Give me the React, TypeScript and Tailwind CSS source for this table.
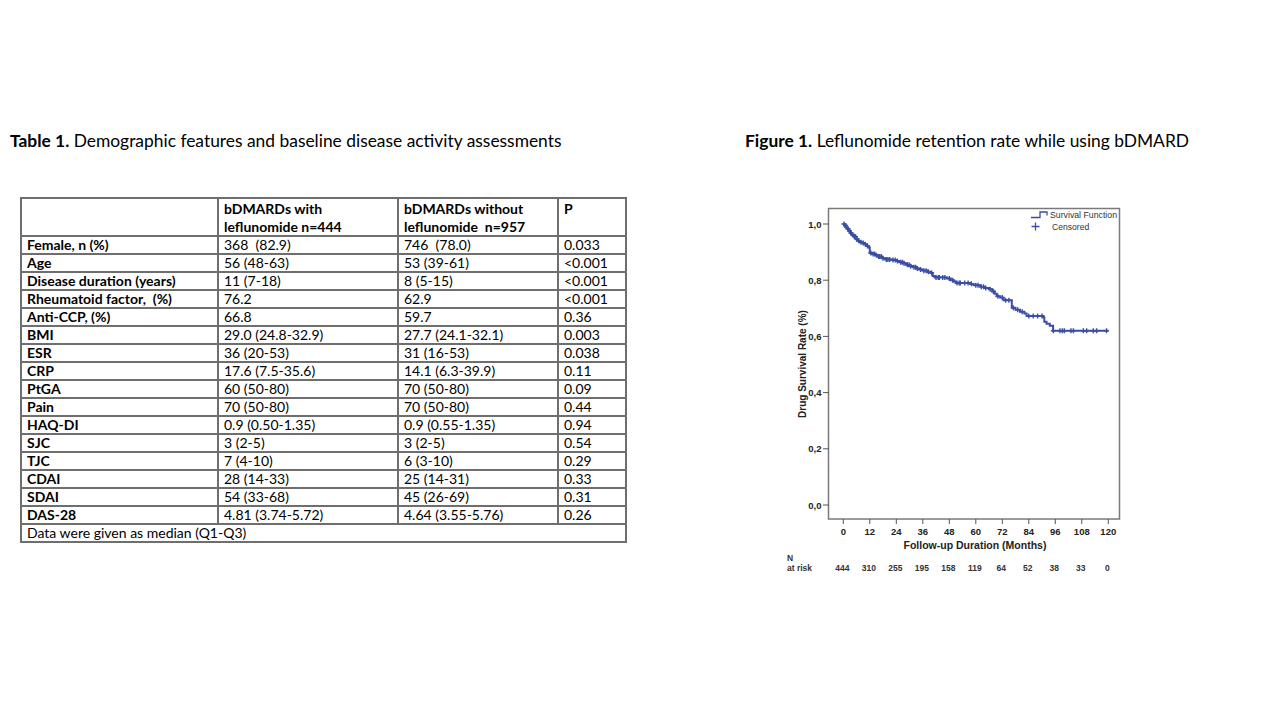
import React from 'react'

type Row = { label: string; a: string; b: string; p: string }

const rows: Row[] = [
    { label: 'Female, n (%)', a: '368  (82.9)', b: '746  (78.0)', p: '0.033' },
    { label: 'Age', a: '56 (48-63)', b: '53 (39-61)', p: '<0.001' },
    { label: 'Disease duration (years)', a: '11 (7-18)', b: '8 (5-15)', p: '<0.001' },
    { label: 'Rheumatoid factor,  (%)', a: '76.2', b: '62.9', p: '<0.001' },
    { label: 'Anti-CCP, (%)', a: '66.8', b: '59.7', p: '0.36' },
    { label: 'BMI', a: '29.0 (24.8-32.9)', b: '27.7 (24.1-32.1)', p: '0.003' },
    { label: 'ESR', a: '36 (20-53)', b: '31 (16-53)', p: '0.038' },
    { label: 'CRP', a: '17.6 (7.5-35.6)', b: '14.1 (6.3-39.9)', p: '0.11' },
    { label: 'PtGA', a: '60 (50-80)', b: '70 (50-80)', p: '0.09' },
    { label: 'Pain', a: '70 (50-80)', b: '70 (50-80)', p: '0.44' },
    { label: 'HAQ-DI', a: '0.9 (0.50-1.35)', b: '0.9 (0.55-1.35)', p: '0.94' },
    { label: 'SJC', a: '3 (2-5)', b: '3 (2-5)', p: '0.54' },
    { label: 'TJC', a: '7 (4-10)', b: '6 (3-10)', p: '0.29' },
    { label: 'CDAI', a: '28 (14-33)', b: '25 (14-31)', p: '0.33' },
    { label: 'SDAI', a: '54 (33-68)', b: '45 (26-69)', p: '0.31' },
    { label: 'DAS-28', a: '4.81 (3.74-5.72)', b: '4.64 (3.55-5.76)', p: '0.26' },
]

// survival curve steps: [month, rate]
const steps: [number, number][] = [
    [0, 1.0], [0.5, 0.995], [1.2, 0.988], [1.8, 0.982], [2.5, 0.975], [3.2, 0.968], [4, 0.962],
    [5, 0.955], [5.8, 0.946], [6.5, 0.94], [7.5, 0.935], [8.5, 0.932], [9.5, 0.928], [10.5, 0.922],
    [11.5, 0.916], [12, 0.897], [13, 0.893], [14.5, 0.889], [16, 0.884], [17.5, 0.878], [19, 0.874],
    [22, 0.872], [24, 0.868], [25.5, 0.864], [27, 0.86], [28.5, 0.855], [30, 0.85], [31.5, 0.846],
    [33, 0.842], [34.5, 0.838], [36, 0.834], [38, 0.83], [39.5, 0.826], [40.5, 0.815], [41.5, 0.81],
    [47, 0.806], [48.5, 0.8], [50, 0.795], [51, 0.79], [57.5, 0.787], [59, 0.782], [62, 0.777],
    [64, 0.772], [66, 0.768], [67.5, 0.76], [68.5, 0.752], [69.5, 0.743], [71, 0.738], [72.5, 0.729],
    [76.3, 0.702], [78, 0.695], [80, 0.688], [82, 0.681], [83, 0.673], [90.5, 0.668], [91, 0.652],
    [92, 0.645], [93.5, 0.638], [95, 0.62],
]

const censored: number[] = [
    0.3, 1, 1.5, 2.2, 2.8, 3.5, 4.2, 5, 5.5, 6.2, 7, 8, 9, 10, 11, 12.5, 13.5, 14.2, 15, 16, 16.5,
    17.2, 18, 19.5, 20.2, 21, 22.5, 23.5, 24.5, 26, 26.8, 27.5, 29, 29.8, 30.5, 32, 32.8, 33.5, 35,
    36.5, 37.5, 38.5, 40, 42, 43, 43.5, 45, 46, 48, 49.5, 51.5, 52.5, 53, 55, 56.5, 58, 60, 61, 62.5,
    63.5, 64.5, 66.5, 68, 70, 72, 73.5, 75, 77, 79, 81, 84, 86, 88, 90, 95.1, 98.1, 99.2, 100.1,
    103.1, 104.2, 108.7, 110.2, 113.2, 114.7, 119.2,
]

const X = (t: number) => 843.3 + t * 2.2083
const Y = (v: number) => 505 - v * 281

const rateAt = (t: number) => {
    let v = 1
    for (const [st, sv] of steps) {
        if (st <= t) v = sv
    }
    return v
}

const curvePath = () => {
    let d = `M${X(0)},${Y(1)}`
    for (const [t, v] of steps) {
        d += ` H${X(t).toFixed(1)} V${Y(v).toFixed(1)}`
    }
    d += ` H${X(120)}`
    return d
}

const yTicks = [1, 0.8, 0.6, 0.4, 0.2, 0]
const xTicks = [0, 12, 24, 36, 48, 60, 72, 84, 96, 108, 120]
const atRisk = ['444', '310', '255', '195', '158', '119', '64', '52', '38', '33', '0']

const BLUE = '#3b4ea6'

function SurvivalChart() {
    return (
        <svg width="350" height="380" viewBox="780 200 350 380" className="block" style={{ fontFamily: '"Liberation Sans", Arial, sans-serif' }}>
            {/* frame */}
            <rect x="828.5" y="208.5" width="291" height="310.5" fill="none" stroke="#7a7a7a" strokeWidth="1.5" />

            {/* y axis */}
            {yTicks.map((v) => (
                <g key={v}>
                    <line x1="823" x2="828.5" y1={Y(v)} y2={Y(v)} stroke="#555" strokeWidth="1" />
                    <text x="821.5" y={Y(v) + 3.5} textAnchor="end" fontSize="9.5" fontWeight="700" fill="#222">
                        {v.toFixed(1).replace('.', ',')}
                    </text>
                </g>
            ))}
            <text
                transform="translate(806,364) rotate(-90)"
                textAnchor="middle"
                fontSize="10"
                fontWeight="700"
                fill="#222"
            >
                Drug Survival Rate (%)
            </text>

            {/* x axis */}
            {xTicks.map((t, i) => (
                <g key={t}>
                    <line x1={X(t)} x2={X(t)} y1="519" y2="524" stroke="#555" strokeWidth="1" />
                    <text x={X(t)} y="535" textAnchor="middle" fontSize="9.5" fontWeight="700" fill="#222">
                        {t}
                    </text>
                    <text x={X(t) - 1} y="570.5" textAnchor="middle" fontSize="8.5" fontWeight="700" fill="#333">
                        {atRisk[i]}
                    </text>
                </g>
            ))}
            <text x="975" y="549" textAnchor="middle" fontSize="10.5" fontWeight="700" fill="#222">
                Follow-up Duration (Months)
            </text>
            <text x="787" y="560.5" fontSize="8.5" fontWeight="700" fill="#333">N</text>
            <text x="787" y="570.5" fontSize="8.5" fontWeight="700" fill="#333">at risk</text>

            {/* legend */}
            <path d="M1031,217.5 H1040 V212 H1047 V215.5" fill="none" stroke={BLUE} strokeWidth="1.3" />
            <text x="1050" y="218" fontSize="8.6" fill="#333" textLength="67" lengthAdjust="spacingAndGlyphs">Survival Function</text>
            <path d="M1031.5,226.5 H1039.5 M1035.5,222.5 V230.5" stroke={BLUE} strokeWidth="1.3" />
            <text x="1052" y="229.5" fontSize="8.6" fill="#333">Censored</text>

            {/* curve */}
            <path d={curvePath()} fill="none" stroke={BLUE} strokeWidth="2" />
            {censored.map((t) => {
                const cx = X(t)
                const cy = Y(rateAt(t))
                return (
                    <path
                        key={t}
                        d={`M${cx - 2.5},${cy} H${cx + 2.5} M${cx},${cy - 2.5} V${cy + 2.5}`}
                        stroke={BLUE}
                        strokeWidth="1.4"
                    />
                )
            })}
        </svg>
    )
}

const cell = 'border-r-2 border-b-2 border-[#6e6e6e] pl-[5px] h-[18px] leading-[16px] whitespace-nowrap'

export default function App() {
    return (
        <div className="flex h-[720px] w-[1280px] bg-white text-black" style={{ fontFamily: 'Lato, "Open Sans", sans-serif' }}>
            <div className="w-[735px] shrink-0 pl-[10px] pt-[130px]">
                <div className="h-[22px] whitespace-nowrap text-[17.4px] leading-[22px]">
                    <span className="font-bold">Table 1.</span> Demographic features and baseline disease activity assessments
                </div>

                <div className="ml-[10px] mt-[45px] grid w-[607px] grid-cols-[197px_180px_160px_68px] border-t-2 border-l-2 border-[#6e6e6e] text-[14px]">
                    <div className="h-[38px] border-r-2 border-b-2 border-[#6e6e6e]" />
                    <div className="h-[38px] border-r-2 border-b-2 border-[#6e6e6e] pl-[5px] pt-[1px] font-bold leading-[18px]">
                        <div>bDMARDs with</div>
                        <div>leflunomide n=444</div>
                    </div>
                    <div className="h-[38px] border-r-2 border-b-2 border-[#6e6e6e] pl-[5px] pt-[1px] font-bold leading-[18px]">
                        <div>bDMARDs without</div>
                        <div className="whitespace-pre">leflunomide  n=957</div>
                    </div>
                    <div className="h-[38px] border-r-2 border-b-2 border-[#6e6e6e] pl-[5px] pt-[1px] font-bold leading-[18px]">P</div>

                    {rows.map((r) => (
                        <React.Fragment key={r.label}>
                            <div className={`${cell} font-bold whitespace-pre`}>{r.label}</div>
                            <div className={`${cell} whitespace-pre`}>{r.a}</div>
                            <div className={`${cell} whitespace-pre`}>{r.b}</div>
                            <div className={cell}>{r.p}</div>
                        </React.Fragment>
                    ))}

                    <div className={`${cell} col-span-4`}>Data were given as median (Q1-Q3)</div>
                </div>
            </div>

            <div className="flex-1 pl-[10px] pt-[130px]">
                <div className="h-[22px] whitespace-nowrap text-[17.4px] leading-[22px]">
                    <span className="font-bold">Figure 1.</span> Leflunomide retention rate while using bDMARD
                </div>
                <div className="ml-[35px] mt-[48px]">
                    <SurvivalChart />
                </div>
            </div>
        </div>
    )
}
